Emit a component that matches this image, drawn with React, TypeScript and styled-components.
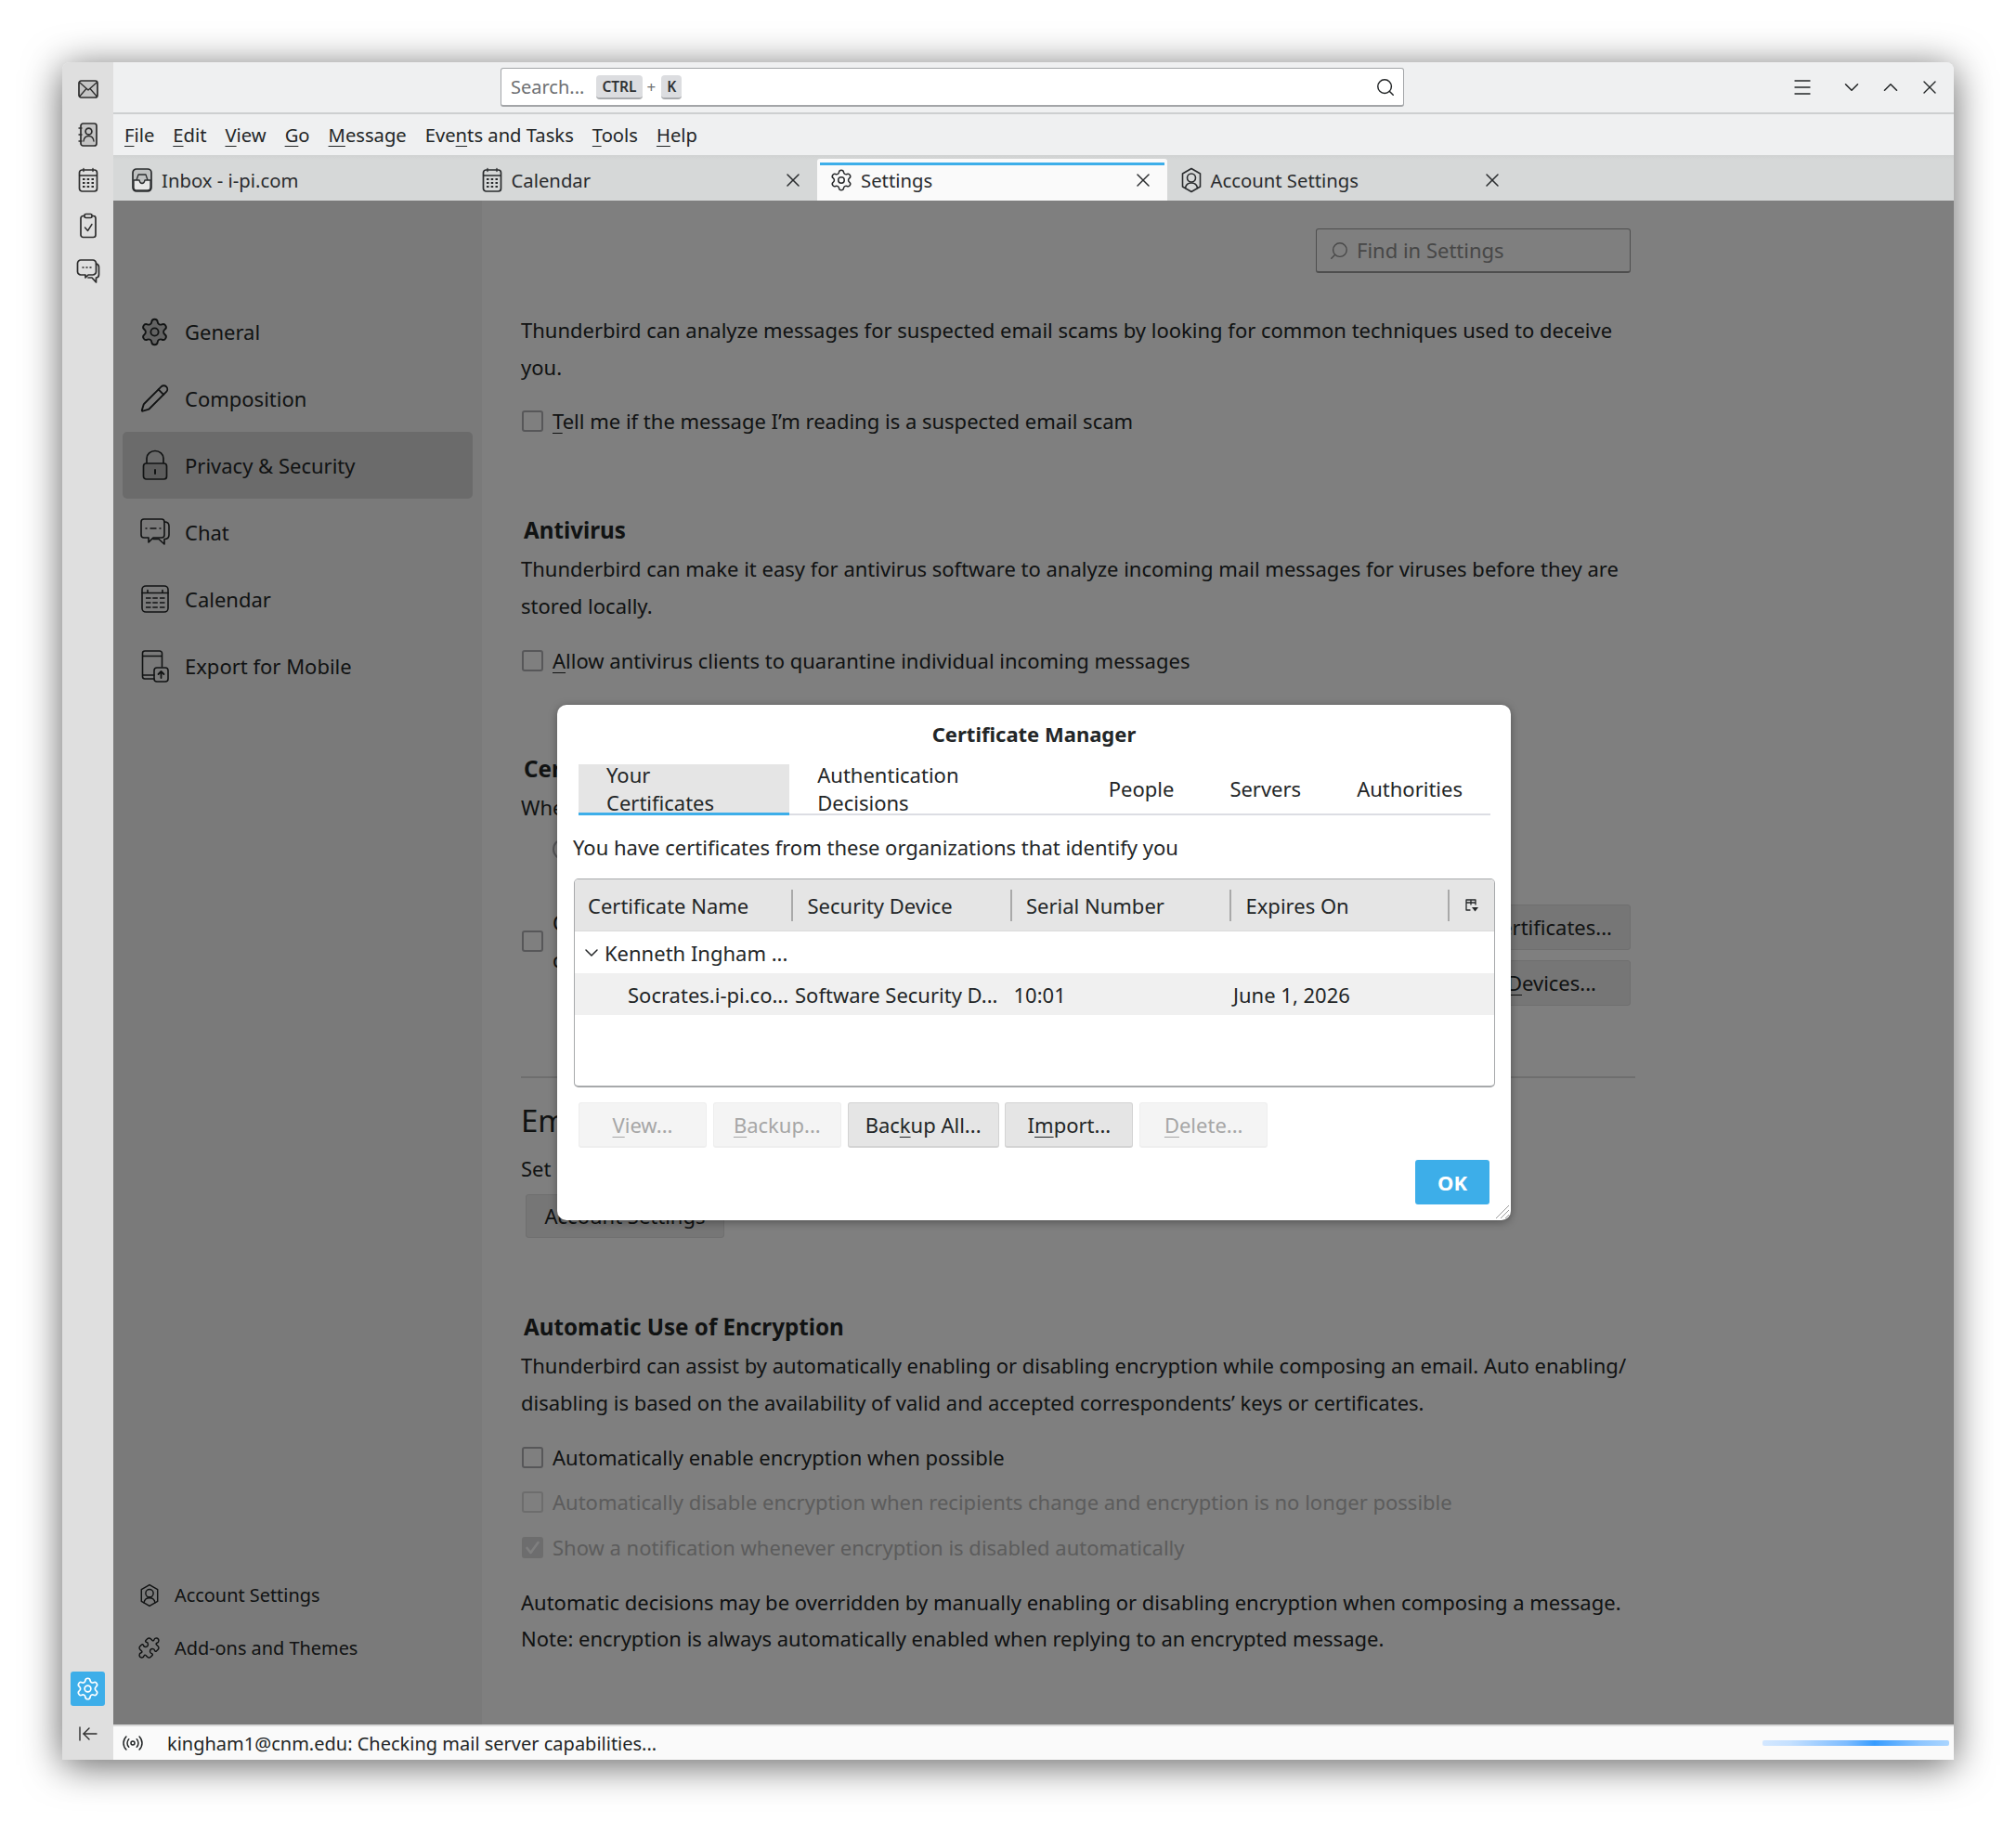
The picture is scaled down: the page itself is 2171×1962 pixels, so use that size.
import React from 'react';
import styled, { createGlobalStyle } from 'styled-components';
import {
  ArrowLeftToLine,
  ChevronDown,
  ChevronUp,
  Menu,
  Pencil,
  Puzzle,
  Radio,
  Search,
  Settings,
  X,
} from 'lucide-react';

const GlobalStyle = createGlobalStyle`
  html, body {
    margin: 0;
    padding: 0;
    background: #ffffff;
  }
  body {
    font-family: "Noto Sans", "Open Sans", sans-serif;
    color: #232627;
  }
  * {
    box-sizing: border-box;
  }
`;

const Page = styled.div`
  width: 2171px;
  height: 1962px;
  padding: 67px 0 0 67px;
`;

const Window = styled.div`
  width: 2037px;
  height: 1828px;
  display: flex;
  border-radius: 8px 8px 0 0;
  overflow: hidden;
  background: #eff0f1;
  box-shadow: 0 6px 42px rgba(0, 0, 0, 0.62);
`;

const Rail = styled.nav`
  width: 55px;
  flex: none;
  display: flex;
  flex-direction: column;
  align-items: center;
  padding: 4px 0 7px;
  background: #dfdfdf;
  color: #2c2c2c;
`;

const RailButton = styled.div<{ $active?: boolean }>`
  width: 37px;
  height: ${(p) => (p.$active ? '37px' : '49px')};
  display: flex;
  align-items: center;
  justify-content: center;
  border-radius: 3px;
  background: ${(p) => (p.$active ? '#3daee9' : 'transparent')};
  color: ${(p) => (p.$active ? '#ffffff' : 'inherit')};
`;

const RailSpacer = styled.div`
  flex: 1;
`;

const RailBack = styled.div`
  margin-top: 9px;
  height: 42px;
  display: flex;
  align-items: center;
`;

const Body = styled.div`
  flex: 1;
  min-width: 0;
  display: flex;
  flex-direction: column;
`;

const TitleBar = styled.div`
  height: 56px;
  flex: none;
  display: flex;
  align-items: center;
  padding: 0 5px 0 417px;
  border-bottom: 2px solid #cdcfd0;
  background: #eff0f1;
`;

const SearchBox = styled.div`
  width: 973px;
  height: 42px;
  display: flex;
  align-items: center;
  padding: 0 8px 0 10px;
  border: 1px solid #a3a5a8;
  border-bottom-width: 2px;
  border-radius: 3px;
  background: #ffffff;
  font-size: 20px;
  color: #6d6f72;
`;

const Key = styled.span`
  height: 26px;
  padding: 0 6px;
  display: inline-flex;
  align-items: center;
  border-bottom: 2px solid #a9abae;
  border-radius: 4px;
  background: #dcdde0;
  font-size: 15.5px;
  font-weight: 600;
  color: #2f3133;
`;

const Plus = styled.span`
  margin: 0 6px 0 5px;
  font-size: 17px;
`;

const SearchHint = styled.span`
  margin-right: 13px;
`;

const SearchIconWrap = styled.span`
  margin-left: auto;
  display: flex;
  color: #232627;
`;

const WindowControls = styled.div`
  margin-left: auto;
  display: flex;
  align-items: center;
  color: #232627;
`;

const ControlButton = styled.div<{ $wide?: boolean }>`
  width: 42px;
  margin-right: ${(p) => (p.$wide ? '11px' : '0')};
  display: flex;
  justify-content: center;
`;

const MenuBar = styled.div`
  height: 44px;
  flex: none;
  display: flex;
  align-items: center;
  gap: 20px;
  padding-left: 12px;
  background: #eff0f1;
  font-size: 20.2px;
`;

const Access = styled.u`
  text-underline-offset: 4px;
  text-decoration-thickness: 1px;
`;

const TabBar = styled.div`
  height: 49px;
  flex: none;
  display: flex;
  align-items: flex-end;
  padding-left: 5px;
  background: linear-gradient(#cfd1d1, #d6d8d8 5px);
`;

const Tab = styled.div<{ $active?: boolean }>`
  position: relative;
  width: 376.5px;
  height: 45px;
  padding: 0 14px 0 13px;
  display: flex;
  align-items: center;
  gap: 8px;
  font-size: 20.3px;
  color: #2a2c2e;
  background: ${(p) => (p.$active ? '#fafafa' : 'transparent')};
  border-radius: 3px 3px 0 0;

  &::before {
    content: '';
    display: ${(p) => (p.$active ? 'block' : 'none')};
    position: absolute;
    top: 4px;
    left: 3px;
    right: 3px;
    height: 3px;
    background: #3daee9;
  }
`;

const TabIcon = styled.span`
  width: 26px;
  flex: none;
  display: flex;
  justify-content: center;
`;

const TabClose = styled.span`
  margin-left: auto;
  display: flex;
`;

const Main = styled.main`
  position: relative;
  flex: 1;
  min-height: 0;
  display: flex;
  background: #fefefe;
  overflow: hidden;
`;

const SideBar = styled.aside`
  width: 397px;
  flex: none;
  display: flex;
  flex-direction: column;
  justify-content: space-between;
  padding: 105px 10px 54px;
  background: #f5f5f5;
`;

const NavList = styled.div`
  display: flex;
  flex-direction: column;
`;

const NavItem = styled.div<{ $active?: boolean }>`
  width: 377px;
  height: 72px;
  padding-left: 18px;
  display: flex;
  align-items: center;
  gap: 16px;
  border-radius: 5px;
  font-size: 22px;
  background: ${(p) => (p.$active ? '#d7d7d7' : 'transparent')};
`;

const NavIcon = styled.span`
  width: 33px;
  flex: none;
  display: flex;
  justify-content: center;
`;

const FootLink = styled.div`
  height: 57px;
  padding-left: 16px;
  display: flex;
  align-items: center;
  gap: 15px;
  font-size: 19.9px;
`;

const FootIcon = styled.span`
  width: 25px;
  flex: none;
  display: flex;
  justify-content: center;
`;

const Content = styled.div`
  flex: 1;
  min-width: 0;
  padding: 30px 0 0 42px;
  font-size: 22px;
  line-height: 39.5px;
`;

const Column = styled.div`
  width: 1200px;
`;

const FindBox = styled.div`
  width: 339px;
  height: 48px;
  margin-left: 856px;
  padding-left: 13px;
  display: flex;
  align-items: center;
  gap: 8px;
  border: 1px solid #9d9d9d;
  border-bottom-width: 2px;
  border-radius: 3px;
  color: #8f8f8f;
`;

const Para = styled.p<{ $top: number }>`
  margin: ${(p) => p.$top}px 0 0;
  width: 1200px;
`;

const SectionTitle = styled.h2<{ $top: number }>`
  margin: ${(p) => p.$top}px 0 0 3px;
  font-size: 24.2px;
  line-height: 39.5px;
  font-weight: 700;
`;

const BigTitle = styled.h1<{ $top: number }>`
  margin: ${(p) => p.$top}px 0 0;
  font-size: 33px;
  line-height: 44px;
  font-weight: 400;
`;

const CheckRow = styled.label<{ $top: number; $dim?: boolean }>`
  margin-top: ${(p) => p.$top}px;
  height: 39.5px;
  display: flex;
  align-items: center;
  gap: 10px;
  padding-left: 1px;
  color: ${(p) => (p.$dim ? '#b9b9b9' : 'inherit')};
`;

const CheckBox = styled.span<{ $dim?: boolean; $checked?: boolean }>`
  width: 23px;
  height: 23px;
  flex: none;
  display: flex;
  align-items: center;
  justify-content: center;
  border: 2px solid ${(p) => (p.$dim ? '#dadada' : '#aeaeb2')};
  border-radius: 3px;
  background: ${(p) => (p.$checked ? '#dadadd' : 'transparent')};
  color: #fefefe;
`;

const RadioDot = styled.span`
  width: 23px;
  height: 23px;
  flex: none;
  border: 2px solid #aeaeb2;
  border-radius: 50%;
`;

const RadioRow = styled.div`
  height: 39.5px;
  margin: 5px 0 0 34px;
  display: flex;
  align-items: center;
  gap: 10px;
`;

const RadioGap = styled.span`
  width: 30px;
`;

const CertActions = styled.div`
  display: flex;
  justify-content: space-between;
  margin-top: 40px;
`;

const CertCheck = styled.div`
  width: 800px;
  display: flex;
  align-items: center;
  align-self: flex-start;
  gap: 10px;
  padding-left: 1px;
`;

const ButtonStack = styled.div`
  width: 300px;
  margin-right: 5px;
  display: flex;
  flex-direction: column;
  gap: 11px;
`;

const PageButton = styled.div<{ $end?: number }>`
  height: 49px;
  display: flex;
  align-items: center;
  justify-content: flex-end;
  padding: 0 ${(p) => p.$end ?? 19}px 0 0;
  border: 1px solid #dedede;
  border-radius: 3px;
  background: #ececec;
  white-space: nowrap;
`;

const AccountButton = styled(PageButton)`
  width: 214px;
  height: 47px;
  margin: 7.5px 0 0 5px;
  justify-content: center;
  padding: 0;
`;

const Rule = styled.hr`
  margin: 75.5px 0 0;
  border: 0;
  border-top: 2px solid #dcdcdc;
`;

const Scrim = styled.div`
  position: absolute;
  inset: 0;
  background: rgba(0, 0, 0, 0.5);
`;

const Dialog = styled.section`
  position: absolute;
  left: 478px;
  top: 543px;
  width: 1027px;
  height: 555px;
  padding: 0 17px;
  border-radius: 10px;
  background: #ffffff;
  box-shadow: 0 2px 10px rgba(0, 0, 0, 0.35);
  font-size: 22px;
  color: #232627;
`;

const DialogTitle = styled.h3`
  height: 64px;
  margin: 0;
  padding-bottom: 3px;
  display: flex;
  align-items: center;
  justify-content: center;
  font-size: 22px;
  font-weight: 700;
`;

const DialogTabs = styled.div`
  height: 55px;
  margin: 0 5px 0 6px;
  display: flex;
  border-bottom: 2px solid #dcdde3;
`;

const DialogTab = styled.div<{ $active?: boolean }>`
  height: 55px;
  padding: 0 30px;
  display: flex;
  align-items: center;
  background: ${(p) => (p.$active ? '#e5e5e5' : 'transparent')};
  border-bottom: 3px solid ${(p) => (p.$active ? '#3daee9' : 'transparent')};
`;

const DialogNote = styled.p`
  height: 68px;
  margin: 0;
  display: flex;
  align-items: center;
  padding-bottom: 0;
`;

const Tree = styled.div`
  height: 225px;
  margin-left: 1px;
  border: 1px solid #a7a9ab;
  border-bottom-width: 2px;
  border-radius: 5px;
  overflow: hidden;
`;

const TreeHead = styled.div`
  height: 56px;
  display: grid;
  grid-template-columns: 235px 235.5px 236.5px 235px 1fr;
  align-items: center;
  border-bottom: 1px solid #dadada;
  background: #e5e5e5;
`;

const HeadCell = styled.div<{ $first?: boolean }>`
  height: 34px;
  padding-left: ${(p) => (p.$first ? '14px' : '15.5px')};
  display: flex;
  align-items: center;
  border-right: 2px solid #a9a9a9;
`;

const PickerCell = styled.div`
  display: flex;
  justify-content: center;
`;

const TreeRow = styled.div<{ $selected?: boolean }>`
  height: 45px;
  display: grid;
  grid-template-columns: 235px 235.5px 236.5px 235px 1fr;
  align-items: center;
  background: ${(p) => (p.$selected ? '#f0f0f0' : '#ffffff')};
`;

const TreeCell = styled.div<{ $pad: number }>`
  padding-left: ${(p) => p.$pad}px;
  display: flex;
  align-items: center;
  white-space: nowrap;
`;

const Twisty = styled.span`
  width: 26px;
  margin-left: 6px;
  display: flex;
`;

const ActionRow = styled.div`
  margin: 16px 0 0 6px;
  display: flex;
  gap: 6.8px;
`;

const ActionButton = styled.div<{ $disabled?: boolean; $wide?: boolean }>`
  width: ${(p) => (p.$wide ? '163px' : '138px')};
  height: 49px;
  display: flex;
  align-items: center;
  justify-content: center;
  border: 1px solid ${(p) => (p.$disabled ? '#eeeeee' : '#d3d3d3')};
  border-bottom-width: 2px;
  border-radius: 3px;
  background: ${(p) => (p.$disabled ? '#f4f4f4' : '#e5e5e5')};
  color: ${(p) => (p.$disabled ? '#a6a6a6' : '#232627')};
`;

const OkRow = styled.div`
  margin: 13px 6px 0 0;
  display: flex;
  justify-content: flex-end;
`;

const OkButton = styled.div`
  width: 80px;
  height: 48px;
  display: flex;
  align-items: center;
  justify-content: center;
  border-radius: 3px;
  background: #3daee9;
  color: #ffffff;
  font-weight: 700;
`;

const Grip = styled.svg`
  position: absolute;
  right: 1px;
  bottom: 1px;
`;

const StatusBar = styled.footer`
  height: 38px;
  flex: none;
  display: flex;
  align-items: center;
  padding: 0 5px 0 9px;
  gap: 25px;
  border-top: 2px solid #d9d9d9;
  background: #fafafa;
  font-size: 20px;
`;

const Progress = styled.div`
  width: 201px;
  height: 6px;
  margin-left: auto;
  border-radius: 2px;
  background: linear-gradient(90deg, #d3e7ff 0%, #c4e0ff 15%, #7dbcff 45%, #369cff 60%, #8ec6ff 85%, #aad5ff 100%);
`;

// Thunderbird's own line icons, drawn by hand
const Line = styled.svg`
  flex: none;
  fill: none;
  stroke: currentColor;
  stroke-linecap: round;
  stroke-linejoin: round;
`;

const MailIcon = () => (
  <Line width="24" height="26" viewBox="0 0 24 26" strokeWidth="1.7">
    <rect x="2" y="4" width="20" height="18" rx="2.5" fill="#c4c4c4" />
    <path d="M3 6l9 8 9-8M3 20.5l7-8M21 20.5l-7-8" strokeWidth="1.3" />
  </Line>
);

const BookIcon = () => (
  <Line width="24" height="28" viewBox="0 0 24 28" strokeWidth="1.7">
    <rect x="4" y="2" width="17" height="24" rx="2.5" fill="#c4c4c4" />
    <circle cx="12.5" cy="10.5" r="3.4" />
    <path d="M7 21c.5-4 3-5.5 5.5-5.5S17.500 17 18 21M2 7h3M2 14h3M2 21h3" strokeWidth="1.4" />
  </Line>
);

const CalendarSmall = () => (
  <Line width="24" height="28" viewBox="0 0 24 28" strokeWidth="1.7">
    <rect x="2.500" y="3" width="19" height="23" rx="3" />
    <path d="M2.500 9h19M7 1.500v3M17 1.500v3" strokeWidth="1.3" />
    <path d="M6 13h2.500M10.700 13h2.500M15.500 13h2.500M6 17h2.500M10.700 17h2.500M15.500 17h2.500M6 21h2.500M10.700 21h2.500M15.500 21h2.500" strokeWidth="2" strokeLinecap="butt" />
  </Line>
);

const TaskIcon = () => (
  <Line width="22" height="28" viewBox="0 0 22 28" strokeWidth="1.7">
    <rect x="3" y="3.500" width="16" height="23" rx="2.500" />
    <rect x="7" y="1.500" width="8" height="4" rx="1.500" fill="#dfdfdf" />
    <path d="M7.500 16l3 3.500 4.500-7" strokeWidth="1.4" />
  </Line>
);

const ChatSmall = () => (
  <Line width="26" height="28" viewBox="0 0 26 28" strokeWidth="1.7">
    <path d="M5 2h13a3.500 3.500 0 0 1 3.500 3.500v9a3.500 3.500 0 0 1-3.500 3.500h-5l-3 3v-3H5a3.500 3.500 0 0 1-3.500-3.500v-9A3.500 3.500 0 0 1 5 2z" />
    <path d="M21.500 6c1.800.4 3 1.700 3 3.500v8c0 2-1.200 3.500-3 3.500v5l-4.500-5h-4" />
    <path d="M7 10h1M11 10h1M15 10h1" strokeWidth="1.500" />
  </Line>
);

const InboxIcon = () => (
  <Line width="24" height="28" viewBox="0 0 24 28" strokeWidth="1.700">
    <rect x="2" y="2" width="20" height="24" rx="4" fill="#bfc1c1" />
    <path d="M6 14l2-6h8l2 6" strokeWidth="1.300" />
    <path d="M3 14h6c.500 2.500 1.500 3.500 3 3.500s2.500-1 3-3.500h6v8a3 3 0 0 1-3 3H6a3 3 0 0 1-3-3z" fill="#e8e8e8" strokeWidth="1.300" />
  </Line>
);

const HexAccount = ({ size }: { size: number }) => (
  <Line width={size} height={size + 4} viewBox="0 0 24 28" strokeWidth="1.600">
    <path d="M12 1.500l9.500 5.500v14l-9.500 5.500L2.500 21V7z" />
    <circle cx="12" cy="11.500" r="4.500" />
    <path d="M5.500 22.500c.500-3.500 3-5.500 6.500-5.500s6 2 6.500 5.500" />
  </Line>
);

const LockIcon = () => (
  <Line width="32" height="34" viewBox="0 0 32 34" strokeWidth="1.700">
    <path d="M7 15V9.500a9 8 0 0 1 18 0V15" />
    <rect x="3.500" y="15" width="25" height="17" rx="3" fill="#b9b9b9" />
    <path d="M16 22v4" strokeWidth="2" />
  </Line>
);

const ChatIcon = () => (
  <Line width="34" height="32" viewBox="0 0 34 32" strokeWidth="1.600">
    <path d="M5 2h19a3 3 0 0 1 3 3v14a3 3 0 0 1-3 3h-9l-5 5v-5H5a3 3 0 0 1-3-3V5a3 3 0 0 1 3-3z" />
    <path d="M27 5c3 0 5 1.500 5 4.500V19c0 3-2 4.500-5 4.500V29l-6-5.500h-6" />
    <path d="M7 12h1M12 12h6M22 12h1" strokeWidth="1.400" />
  </Line>
);

const CalendarIcon = () => (
  <Line width="32" height="32" viewBox="0 0 32 32" strokeWidth="1.600">
    <rect x="2" y="2" width="28" height="28" rx="4" />
    <path d="M2 9.500h28M8 6.500v3M24 6.500v3" />
    <path d="M6 15h5.500M13.300 15h5.500M21 15h5.500M6 20h5.500M13.300 20h5.500M21 20h5.500M6 25h5.500M13.300 25h5.500M21 25h5.500" strokeWidth="1.700" strokeLinecap="butt" />
  </Line>
);

const ExportIcon = () => (
  <Line width="32" height="36" viewBox="0 0 32 36" strokeWidth="1.600">
    <path d="M15 32H5a2.500 2.500 0 0 1-2.500-2.500v-25A2.500 2.500 0 0 1 5 2h16a2.500 2.500 0 0 1 2.500 2.500V19M2.500 7.500h21M2.500 28H15" />
    <rect x="15" y="20" width="15" height="15" rx="3" />
    <path d="M22.500 31v-7M19.500 27l3-3 3 3" strokeWidth="1.800" />
  </Line>
);

const ColumnPicker = () => (
  <Line width="16" height="16" viewBox="0 0 16 16" strokeWidth="1.300">
    <path d="M2 9V2h10v5M2 5h10M7 2v5M2 9v4h4" />
    <path d="M8 10h7l-3.500 4.500z" fill="currentColor" stroke="none" />
  </Line>
);

const CheckMark = () => (
  <Line width="17" height="17" viewBox="0 0 17 17" strokeWidth="2.600">
    <path d="M2.500 9l4 5 8-11" />
  </Line>
);

const App: React.FC = () => {
  return (
    <Page>
      <GlobalStyle />
      <Window>
        <Rail>
          <RailButton><MailIcon /></RailButton>
          <RailButton><BookIcon /></RailButton>
          <RailButton><CalendarSmall /></RailButton>
          <RailButton><TaskIcon /></RailButton>
          <RailButton><ChatSmall /></RailButton>
          <RailSpacer />
          <RailButton $active><Settings size={27} strokeWidth={1.5} /></RailButton>
          <RailBack><ArrowLeftToLine size={24} strokeWidth={1.4} /></RailBack>
        </Rail>

        <Body>
          <TitleBar>
            <SearchBox>
              <SearchHint>Search...</SearchHint>
              <Key>CTRL</Key>
              <Plus>+</Plus>
              <Key>K</Key>
              <SearchIconWrap><Search size={22} strokeWidth={1.6} /></SearchIconWrap>
            </SearchBox>
            <WindowControls>
              <ControlButton $wide><Menu size={24} strokeWidth={1.4} /></ControlButton>
              <ControlButton><ChevronDown size={26} strokeWidth={1.4} /></ControlButton>
              <ControlButton><ChevronUp size={26} strokeWidth={1.4} /></ControlButton>
              <ControlButton><X size={24} strokeWidth={1.4} /></ControlButton>
            </WindowControls>
          </TitleBar>

          <MenuBar>
            <span><Access>F</Access>ile</span>
            <span><Access>E</Access>dit</span>
            <span><Access>V</Access>iew</span>
            <span><Access>G</Access>o</span>
            <span><Access>M</Access>essage</span>
            <span>Eve<Access>n</Access>ts and Tasks</span>
            <span><Access>T</Access>ools</span>
            <span><Access>H</Access>elp</span>
          </MenuBar>

          <TabBar>
            <Tab>
              <TabIcon><InboxIcon /></TabIcon>
              <span>Inbox - i-pi.com</span>
            </Tab>
            <Tab>
              <TabIcon><CalendarSmall /></TabIcon>
              <span>Calendar</span>
              <TabClose><X size={24} strokeWidth={1.5} /></TabClose>
            </Tab>
            <Tab $active>
              <TabIcon><Settings size={28} strokeWidth={1.4} /></TabIcon>
              <span>Settings</span>
              <TabClose><X size={24} strokeWidth={1.5} /></TabClose>
            </Tab>
            <Tab>
              <TabIcon><HexAccount size={24} /></TabIcon>
              <span>Account Settings</span>
              <TabClose><X size={24} strokeWidth={1.5} /></TabClose>
            </Tab>
          </TabBar>

          <Main>
            <SideBar>
              <NavList>
                <NavItem><NavIcon><Settings size={37} strokeWidth={1.35} fill="#c9c9c9" /></NavIcon><span>General</span></NavItem>
                <NavItem><NavIcon><Pencil size={34} strokeWidth={1.35} /></NavIcon><span>Composition</span></NavItem>
                <NavItem $active><NavIcon><LockIcon /></NavIcon><span>Privacy &amp; Security</span></NavItem>
                <NavItem><NavIcon><ChatIcon /></NavIcon><span>Chat</span></NavItem>
                <NavItem><NavIcon><CalendarIcon /></NavIcon><span>Calendar</span></NavItem>
                <NavItem><NavIcon><ExportIcon /></NavIcon><span>Export for Mobile</span></NavItem>
              </NavList>
              <div>
                <FootLink><FootIcon><HexAccount size={22} /></FootIcon><span>Account Settings</span></FootLink>
                <FootLink><FootIcon><Puzzle size={25} strokeWidth={1.4} /></FootIcon><span>Add-ons and Themes</span></FootLink>
              </div>
            </SideBar>

            <Content>
              <Column>
                <FindBox>
                  <Search size={22} strokeWidth={1.5} style={{ transform: 'scaleX(-1)' }} />
                  <span>Find in Settings</span>
                </FindBox>

                <Para $top={42}>
                  Thunderbird can analyze messages for suspected email scams by looking for common techniques used to deceive you.
                </Para>
                <CheckRow $top={19}>
                  <CheckBox />
                  <span><Access>T</Access>ell me if the message I’m reading is a suspected email scam</span>
                </CheckRow>

                <SectionTitle $top={77}>Antivirus</SectionTitle>
                <Para $top={3}>
                  Thunderbird can make it easy for antivirus software to analyze incoming mail messages for viruses before they are stored locally.
                </Para>
                <CheckRow $top={20}>
                  <CheckBox />
                  <span><Access>A</Access>llow antivirus clients to quarantine individual incoming messages</span>
                </CheckRow>

                <SectionTitle $top={76}>Certificates</SectionTitle>
                <Para $top={3}>When a server requests my personal certificate:</Para>
                <RadioRow>
                  <RadioDot /><span>Select one automatically</span>
                  <RadioGap />
                  <RadioDot /><span>Ask me every time</span>
                </RadioRow>
                <CertActions>
                  <CertCheck>
                    <CheckBox />
                    <span>Query OCSP responder servers to confirm the current validity of certificates</span>
                  </CertCheck>
                  <ButtonStack>
                    <PageButton><span><Access>M</Access>anage Certificates...</span></PageButton>
                    <PageButton $end={36}><span>Security <Access>D</Access>evices...</span></PageButton>
                  </ButtonStack>
                </CertActions>

                <Rule />

                <BigTitle $top={24}>Email Encryption</BigTitle>
                <Para $top={10.5}>Set up OpenPGP and S/MIME in your account settings</Para>
                <AccountButton>Account Settings</AccountButton>

                <SectionTitle $top={76}>Automatic Use of Encryption</SectionTitle>
                <Para $top={2.5}>
                  Thunderbird can assist by automatically enabling or disabling encryption while composing an email. Auto enabling/<wbr />disabling is based on the availability of valid and accepted correspondents’ keys or certificates.
                </Para>
                <CheckRow $top={19.5}>
                  <CheckBox />
                  <span>Automatically enable encryption when possible</span>
                </CheckRow>
                <CheckRow $top={9} $dim>
                  <CheckBox $dim />
                  <span>Automatically disable encryption when recipients change and encryption is no longer possible</span>
                </CheckRow>
                <CheckRow $top={9} $dim>
                  <CheckBox $dim $checked><CheckMark /></CheckBox>
                  <span>Show a notification whenever encryption is disabled automatically</span>
                </CheckRow>
                <Para $top={19.5}>
                  Automatic decisions may be overridden by manually enabling or disabling encryption when composing a message. Note: encryption is always automatically enabled when replying to an encrypted message.
                </Para>
              </Column>
            </Content>

            <Scrim />

            <Dialog>
              <DialogTitle>Certificate Manager</DialogTitle>
              <DialogTabs>
                <DialogTab $active>Your Certificates</DialogTab>
                <DialogTab>Authentication Decisions</DialogTab>
                <DialogTab>People</DialogTab>
                <DialogTab>Servers</DialogTab>
                <DialogTab>Authorities</DialogTab>
              </DialogTabs>
              <DialogNote>You have certificates from these organizations that identify you</DialogNote>
              <Tree>
                <TreeHead>
                  <HeadCell $first>Certificate Name</HeadCell>
                  <HeadCell>Security Device</HeadCell>
                  <HeadCell>Serial Number</HeadCell>
                  <HeadCell>Expires On</HeadCell>
                  <PickerCell><ColumnPicker /></PickerCell>
                </TreeHead>
                <TreeRow>
                  <TreeCell $pad={0}>
                    <Twisty><ChevronDown size={24} strokeWidth={1.5} /></Twisty>
                    <span>Kenneth Ingham ...</span>
                  </TreeCell>
                </TreeRow>
                <TreeRow $selected>
                  <TreeCell $pad={57}>Socrates.i-pi.co...</TreeCell>
                  <TreeCell $pad={2}>Software Security D...</TreeCell>
                  <TreeCell $pad={2}>10:01</TreeCell>
                  <TreeCell $pad={2}>June 1, 2026</TreeCell>
                </TreeRow>
              </Tree>
              <ActionRow>
                <ActionButton $disabled><span><Access>V</Access>iew...</span></ActionButton>
                <ActionButton $disabled><span><Access>B</Access>ackup...</span></ActionButton>
                <ActionButton $wide><span>Bac<Access>k</Access>up All...</span></ActionButton>
                <ActionButton><span>I<Access>m</Access>port...</span></ActionButton>
                <ActionButton $disabled><span><Access>D</Access>elete...</span></ActionButton>
              </ActionRow>
              <OkRow><OkButton>OK</OkButton></OkRow>
              <Grip width="16" height="16" viewBox="0 0 16 16" stroke="#9a9a9a" strokeWidth="1">
                <path d="M1 15L15 1M6 15l9-9M11 15l4-4" />
              </Grip>
            </Dialog>
          </Main>

          <StatusBar>
            <Radio size={24} strokeWidth={1.5} />
            <span>kingham1@cnm.edu: Checking mail server capabilities...</span>
            <Progress />
          </StatusBar>
        </Body>
      </Window>
    </Page>
  );
};

export default App;
